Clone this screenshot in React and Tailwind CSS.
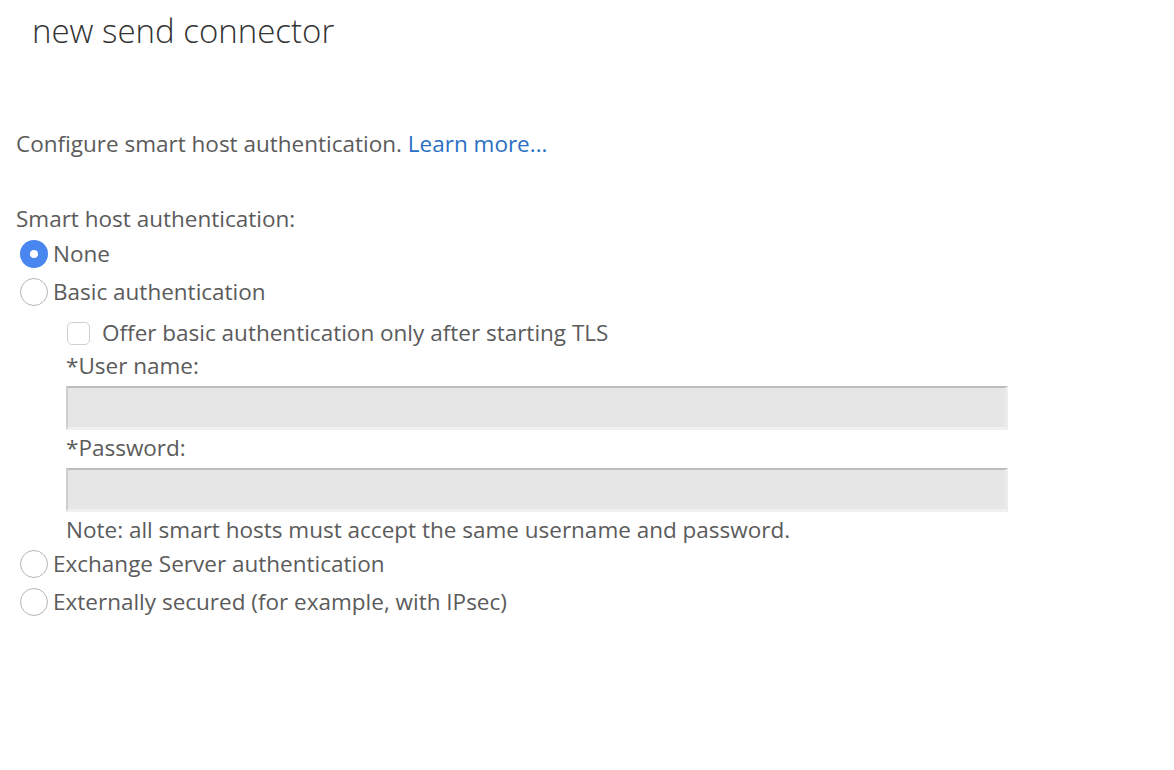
import React from 'react';

const font = { fontFamily: '"Open Sans", "Noto Sans", sans-serif' };

function Radio({ checked, label }) {
  return (
    <label className="flex items-center h-[38px] pl-[20px] gap-[5px]">
      {checked ? (
        <span className="w-[28px] h-[28px] rounded-full bg-[#4a86f0] flex items-center justify-center shrink-0">
          <span className="w-[8px] h-[8px] rounded-full bg-white" />
        </span>
      ) : (
        <span className="w-[28px] h-[28px] rounded-full border border-[#b5b5b5] bg-white shrink-0" />
      )}
      <span>{label}</span>
    </label>
  );
}

function Field() {
  return (
    <div className="w-[942px] h-[44px] bg-[#e6e6e6] border-t-2 border-t-[#bdbdbd] border-l-2 border-l-[#cfcfcf] border-b-[3px] border-b-[#f0f0f0] border-r-[3px] border-r-[#ececec]" />
  );
}

export default function App() {
  return (
    <div className="w-[1174px] h-[770px] bg-white text-[#5b5b5b] text-[22.5px]" style={font}>
      <h1 className="pl-[32px] pt-[10px] h-[50px] text-[33px] leading-[42px] font-light text-[#333]">
        new send connector
      </h1>

      <p className="pl-[16px] mt-[80px] h-[28px] leading-[28px]">
        Configure smart host authentication.{' '}
        <a className="text-[#2a6fc4]">Learn more...</a>
      </p>

      <p className="pl-[16px] mt-[47px] h-[28px] leading-[28px]">Smart host authentication:</p>

      <div className="mt-[2px]">
        <Radio checked label="None" />
        <Radio label="Basic authentication" />

        <div className="pl-[66px] pt-[3px]">
          <label className="flex items-center h-[38px] gap-[12px] pl-[1px]">
            <span className="w-[23px] h-[23px] rounded-[5px] border border-[#d0d0d0] bg-white shrink-0" />
            <span>Offer basic authentication only after starting TLS</span>
          </label>
          <div className="h-[28px] leading-[28px]">*User name:</div>
          <div className="mt-[6px]">
            <Field />
          </div>
          <div className="mt-[4px] h-[28px] leading-[28px]">*Password:</div>
          <div className="mt-[6px]">
            <Field />
          </div>
          <div className="mt-[4px] h-[28px] leading-[28px]">
            Note: all smart hosts must accept the same username and password.
          </div>
        </div>

        <div className="mt-[1px]">
          <Radio label="Exchange Server authentication" />
          <Radio label="Externally secured (for example, with IPsec)" />
        </div>
      </div>
    </div>
  );
}
